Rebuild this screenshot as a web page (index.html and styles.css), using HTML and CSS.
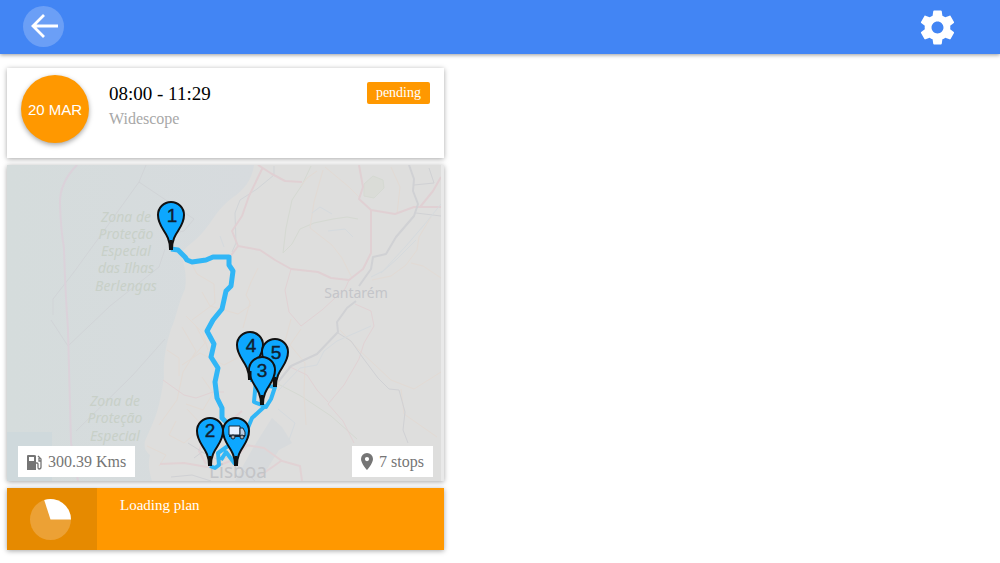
FILE: index.html
```html
<!DOCTYPE html>
<html lang="en">
<head>
<meta charset="utf-8">
<meta name="viewport" content="width=device-width, initial-scale=1">
<title>Route plan</title>
<link rel="stylesheet" href="styles.css">
</head>
<body>
<header class="topbar">
  <button class="icon-button back" type="button" aria-label="Back">
    <svg width="40" height="40" viewBox="0 0 40 40" aria-hidden="true"><path d="M34 20H9M20 9L9 20l11 11" fill="none" stroke="#fff" stroke-width="2.8"/></svg>
  </button>
  <button class="icon-button" type="button" aria-label="Settings">
    <svg width="41" height="41" viewBox="0 0 24 24" aria-hidden="true"><path fill="#fff" d="M19.430 12.980c.04-.32.07-.64.07-.98s-.03-.66-.07-.98l2.110-1.650c.19-.15.24-.42.12-.64l-2-3.460c-.12-.22-.39-.3-.61-.22l-2.490 1c-.52-.4-1.080-.73-1.690-.98l-.38-2.650C14.460 2.180 14.250 2 14 2h-4c-.25 0-.46.18-.49.42l-.38 2.650c-.61.25-1.170.59-1.690.98l-2.490-1c-.23-.09-.49 0-.61.22l-2 3.460c-.13.22-.07.49.12.64l2.110 1.650c-.04.32-.07.65-.07.98s.03.66.07.98l-2.110 1.650c-.19.15-.24.42-.12.64l2 3.460c.12.22.39.3.61.22l2.490-1c.52.4 1.080.73 1.690.98l.38 2.650c.03.24.24.42.49.42h4c.25 0 .46-.18.49-.42l.38-2.650c.61-.25 1.170-.59 1.690-.98l2.490 1c.23.09.49 0 .61-.22l2-3.460c.12-.22.07-.49-.12-.64l-2.110-1.650zM12 15.500c-1.930 0-3.500-1.570-3.500-3.500s1.570-3.500 3.500-3.500 3.500 1.570 3.500 3.500-1.570 3.500-3.500 3.500z"/></svg>
  </button>
</header>
<main class="plan">
  <section class="card summary">
    <div class="date">20 MAR</div>
    <div class="details">
      <h1 class="time">08:00 - 11:29</h1>
      <p class="customer">Widescope</p>
    </div>
    <span class="status">pending</span>
  </section>

  <section class="card map">
    <svg class="map-image" viewBox="7 165 434 316" preserveAspectRatio="xMidYMid slice" role="img" aria-label="Route map">
      <defs>
        <linearGradient id="sea" x1="0" x2="1"><stop offset="0" stop-color="#d5dcdc"/><stop offset="1" stop-color="#d7dbde"/></linearGradient>
        <path id="pin" d="M-1 0C-1-17-13-20-13-34A13 13 0 0 1 13-34C13-20 1-17 1 0Z"/>
      </defs>
      <rect x="7" y="165" width="434" height="316" fill="#dededd"/>
      <path fill="url(#sea)" d="M7 165H254C252 180 244 190 232 198C218 208 212 222 203 232C194 243 184 247 181 254C185 265 187 278 185 289C178 304 176 318 171 329C166 345 163 360 164 377C161 398 158 412 152 425L145 441Q143 450 150 455Q147 466 152 481H7Z"/>
      <path fill="#cfd9dc" d="M7 432H52V481H7Z"/>
      <path fill="#d7dadc" d="M253 448L263 432L272 418L282 427L292 443L279 450L272 461L260 481H235L243 466Z"/>
      <g fill="none" stroke="#d5d9d2" stroke-width="1">
        <path fill="#dadcd7" d="M364 184L373 176L383 180L384 188L374 198L364 196Z"/>
        <path d="M311 166L302 185L292 200L286 228L283 253L292 244L300 229L314 223L333 219L347 217L358 219"/>
        <path d="M278 384L301 396L331 416L357 439"/>
      </g>
      <g fill="none" stroke="#d1d4d7" stroke-width="1">
        <path d="M146 165L139 182L194 219L184 231L174 233M139 182L98 239L74 272L53 299M165 249L159 267L110 306L68 346L51 320M165 339L132 376L76 431M53 299L53 315"/>
        <path d="M274 166V175L257 189L240 200L235 213L236 243L232 252"/>
      </g>
      <g fill="none" stroke="#dbd2da" stroke-width="2">
        <path d="M77 165Q59 183 60 205Q61 232 64 248Q65 287 68 330L71 443L78 481"/>
      </g>
      <g fill="none" stroke="#e2dad4" stroke-width="1">
        <path d="M325 167L349 187L359 197M323 170L314 202L310 228L332 245L342 258L352 278M391 167L400 187L397 214M431 217L419 237L417 250L406 265L391 276L372 280M441 278L423 266L411 263"/>
        <path d="M258 268L251 282L246 295L250 302L243 328M188 257L197 274L214 284L215 303L192 320M182 327L196 351L183 372L177 400L159 425M196 326L205 343L193 357M167 350L179 358L179 376M202 377L213 393L203 410L186 404M147 446L166 455L159 466M176 421L169 435L184 443L196 433"/>
        <path d="M340 330L359 350L391 380L414 389L441 372M401 389L404 414L437 437M301 329L290 345L305 363L304 394L306 425M291 319L284 345L267 345L260 360L244 359M202 292L210 306L238 314L251 305"/>
        <path d="M186 316L203 333L208 350M182 365L200 353L224 365L241 356L248 345M187 409L201 424L209 417L217 435M317 171L307 178L301 186"/>
      </g>
      <g fill="none" stroke="#e0d0d3" stroke-width="2" stroke-linejoin="round">
        <path d="M258 165L272 174L285 181L302 182M263 167L249 196L242 216L232 231L238 246L260 250L275 260L291 269L318 272L331 278L349 280L363 269L371 253L371 210L359 199L363 187L359 165M371 210L395 214L414 207L441 207M420 207L433 191L441 177M238 246L230 257"/>
      </g>
      <g fill="none" stroke="#e1d2d4" stroke-width="1" stroke-linejoin="round">
        <path d="M291 269L285 290L289 312L301 326L322 310L334 299L345 289L349 280M355 304L371 311L374 326L364 343L359 359L344 385L328 404L343 421L354 443M288 366L307 375L317 390L328 402M163 380L184 395L196 398L213 392L224 392"/>
        <path stroke-width="2" d="M246 445L264 448L282 461L300 466L302 481M160 464L184 463L213 468L235 459L248 444M218 423L205 436L199 451L206 464M242 411L229 422L224 439M281 461L261 475"/>
      </g>
      <g fill="none" stroke="#d0d1d4" stroke-width="2" stroke-linejoin="round">
        <path d="M409 165L414 179L413 191L418 204L414 216L396 237L386 254L373 257L371 269L359 286M356 301L347 308L337 322L338 332L317 354L291 366L278 382"/>
        <path stroke-width="1" d="M338 333L351 341L363 358L378 378L389 389L399 390L405 412L403 430L408 443M414 185L434 183L429 168M416 213L441 216M207 455L188 443M236 464L255 481M171 477L192 475L211 481M194 458L202 452L221 461L239 449"/>
      </g>
      <g fill="none" stroke="#d5dadd" stroke-width="1">
        <path d="M441 204L424 225L406 246L383 271L371 277M381 273L397 259L416 240M220 236L224 247M371 326L337 341L324 351L317 365L300 368L278 391M278 409L295 423L289 440M312 213L320 207L332 214M328 231L345 229L353 237"/>
      </g>
      <g class="place park">
        <text x="126" y="222">Zona de</text><text x="126" y="239">Proteção</text><text x="126" y="256">Especial</text><text x="126" y="273">das Ilhas</text><text x="126" y="291">Berlengas</text>
        <text x="115" y="406">Zona de</text><text x="115" y="423">Proteção</text><text x="115" y="441">Especial</text>
      </g>
      <text class="place town" x="356" y="298">Santarém</text>
      <text class="place city" x="238" y="478">Lisboa</text>
      <g fill="none" stroke="#31b6f6" stroke-width="5" stroke-linejoin="round">
        <path d="M171 249L178 250L185 257L187 260L192 262L206 260L213 257H229V265L233 271L231 286L226 291L222 309L213 320L207 331L214 344L211 357L218 368L215 382L217 398L222 408V418L230 426"/>
        <path stroke-width="4" d="M250 380H256L254 402L262 405L266 407L271 399L275 387L257 384M264 407L252 418L247 430M210 466L215 468L219 465L218 453L228 446M221 460L226 452L235 464"/>
      </g>
      <g fill="#0da7ff" stroke="#111" stroke-width="2">
        <use href="#pin" x="171" y="249"/><use href="#pin" x="210" y="465"/><use href="#pin" x="236" y="465"/><use href="#pin" x="250" y="379"/><use href="#pin" x="275" y="386"/><use href="#pin" x="262" y="404"/>
      </g>
      <path d="M171 240V250M210 456V466M236 456V466M250 371V380M275 377V387M262 395V405" stroke="#111" stroke-width="3"/>
      <g class="pin-number">
        <text x="172" y="222">1</text><text x="210" y="437">2</text><text x="262" y="377">3</text><text x="251" y="352">4</text><text x="276" y="359">5</text>
      </g>
      <g stroke="#172635" stroke-width="1">
        <path fill="#e9f2ff" d="M229 426H240V435H229Z"/><path fill="#b9cce3" d="M240 428H243L245 432V436H240Z"/><path d="M229 436H245" stroke-width="2"/>
        <circle cx="233" cy="437" r="2" fill="#aaa"/><circle cx="242" cy="437" r="2" fill="#aaa"/>
      </g>
    </svg>
    <div class="facts">
      <span class="fact">
        <svg width="15" height="16" viewBox="1 0 15 16" aria-hidden="true"><path fill="#757575" fill-rule="evenodd" d="M1 2Q1 1 2 1H8Q10 1 10 2V16H1ZM3 3V7H8V3Z"/><path d="M10 9H11Q12 9 12 10V13Q12 15 13 15Q15 15 15 13V5L12 2M13 4V7H15" fill="none" stroke="#757575" stroke-width="1.300"/></svg>
        300.39 Kms
      </span>
      <span class="fact">
        <svg width="12" height="17" viewBox="0 0 12 17" aria-hidden="true"><path fill="#757575" fill-rule="evenodd" d="M6 0A6 6 0 0 0 0 6C0 10.500 6 17 6 17S12 10.500 12 6A6 6 0 0 0 6 0ZM6 4A2.100 2.100 0 1 1 6 8.200A2.100 2.100 0 0 1 6 4Z"/></svg>
        7 stops
      </span>
    </div>
  </section>

  <section class="card loading" role="status">
    <div class="progress">
      <svg width="41" height="41" viewBox="0 0 41 41" aria-hidden="true"><circle cx="20.500" cy="20.500" r="20.500" fill="#eca135"/><path d="M20.500 20.500L14.200 1A20.500 20.500 0 0 1 41 20.500Z" fill="#fff"/></svg>
    </div>
    <p class="message">Loading plan</p>
  </section>
</main>
</body>
</html>
```
FILE: styles.css
```css
* { box-sizing: border-box; }

body {
  margin: 0;
  background: #fff;
  font-family: "Liberation Serif", "Times New Roman", serif;
}

h1, p { margin: 0; font-weight: 400; }

svg { display: block; flex: none; }

.topbar {
  display: flex;
  align-items: center;
  justify-content: space-between;
  height: 54px;
  padding: 0 42px 0 23px;
  background: #4285f4;
  box-shadow: 0 1px 4px rgba(0, 0, 0, .4);
}

.icon-button {
  display: grid;
  place-items: center;
  width: 42px;
  height: 42px;
  padding: 0;
  border: 0;
  border-radius: 50%;
  background: none;
}

.back {
  width: 41px;
  height: 41px;
  margin-bottom: 2px;
  background: #6b9ff6;
}

.plan {
  display: flex;
  flex-direction: column;
  gap: 7px;
  width: 44.4%;
  margin-top: 14px;
  padding: 0 0 14px 7px;
}

.card {
  background: #fff;
  box-shadow: 0 1px 5px rgba(0, 0, 0, .35);
}

.summary {
  display: flex;
  align-items: flex-start;
  min-height: 90px;
  padding: 7px 14px;
}

.date {
  display: grid;
  place-items: center;
  flex: none;
  width: 68px;
  height: 68px;
  border-radius: 50%;
  background: #ff9800;
  box-shadow: 0 2px 5px rgba(0, 0, 0, .35);
  color: #fff;
  font: 15px "Liberation Sans", Arial, sans-serif;
}

.details {
  flex: 1;
  padding: 7px 0 0 20px;
}

.time { font-size: 19px; line-height: 24px; }

.customer {
  color: #a8a8a8;
  font-size: 16px;
  line-height: 26px;
}

.status {
  margin-top: 7px;
  padding: 0 9px;
  border-radius: 2px;
  background: #ff9800;
  color: #fff;
  font-size: 14px;
  line-height: 22px;
}

.map {
  position: relative;
  padding-right: 3px;
  background: #e9e9e9;
}

.map-image {
  width: 100%;
  height: auto;
}

.place {
  font-family: "Noto Sans", sans-serif;
  text-anchor: middle;
}

.park {
  fill: #c8d0c8;
  font-size: 14px;
  font-style: italic;
}

.town { fill: #c4c5c9; font-size: 14px; }

.city { fill: #c3c4c7; font-size: 19px; }

.pin-number {
  fill: #102030;
  stroke: #102030;
  font: 19px "Liberation Sans", Arial, sans-serif;
  text-anchor: middle;
  stroke-width: .4;
}

.facts {
  position: absolute;
  right: 11px;
  bottom: 4px;
  left: 11px;
  display: flex;
  justify-content: space-between;
}

.fact {
  display: flex;
  align-items: center;
  gap: 6px;
  padding: 0 9px;
  background: #fff;
  color: #757575;
  font-size: 16px;
  line-height: 31px;
}

.loading {
  display: flex;
  min-height: 62px;
  background: #ff9800;
}

.progress {
  display: grid;
  place-items: center;
  width: 90px;
  padding-right: 4px;
  background: #e68a00;
}

.message {
  padding: 8px 23px;
  color: #fff;
  font-size: 15px;
  line-height: 18px;
}
```
